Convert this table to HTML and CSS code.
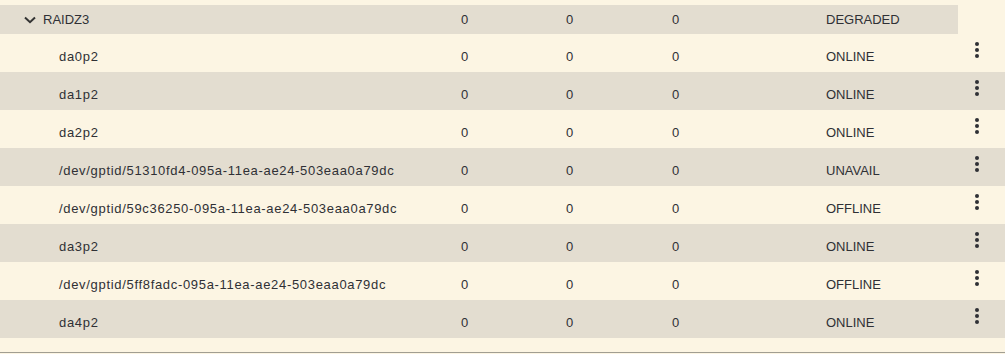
FILE: index.html
```html
<!DOCTYPE html>
<html>
<head>
<meta charset="utf-8">
<link rel="stylesheet" href="styles.css">
</head>
<body>
<div class="table">
  <div class="row parent">
    <div class="cell name"><svg class="chev" width="12" height="8" viewBox="0 0 12 8"><path d="M1 1.5 L6 6.2 L11 1.5" fill="none" stroke="#333" stroke-width="2"/></svg>RAIDZ3</div>
    <div class="cell">0</div><div class="cell">0</div><div class="cell">0</div>
    <div class="cell">DEGRADED</div>
  </div>
  <div class="row child">
    <div class="cell name">da0p2</div><div class="cell">0</div><div class="cell">0</div><div class="cell">0</div><div class="cell">ONLINE</div>
    <div class="cell act"><svg width="24" height="24" viewBox="0 0 24 24"><circle cx="12" cy="6" r="2"/><circle cx="12" cy="12" r="2"/><circle cx="12" cy="18" r="2"/></svg></div>
  </div>
  <div class="row child alt">
    <div class="cell name">da1p2</div><div class="cell">0</div><div class="cell">0</div><div class="cell">0</div><div class="cell">ONLINE</div>
    <div class="cell act"><svg width="24" height="24" viewBox="0 0 24 24"><circle cx="12" cy="6" r="2"/><circle cx="12" cy="12" r="2"/><circle cx="12" cy="18" r="2"/></svg></div>
  </div>
  <div class="row child">
    <div class="cell name">da2p2</div><div class="cell">0</div><div class="cell">0</div><div class="cell">0</div><div class="cell">ONLINE</div>
    <div class="cell act"><svg width="24" height="24" viewBox="0 0 24 24"><circle cx="12" cy="6" r="2"/><circle cx="12" cy="12" r="2"/><circle cx="12" cy="18" r="2"/></svg></div>
  </div>
  <div class="row child alt">
    <div class="cell name">/dev/gptid/51310fd4-095a-11ea-ae24-503eaa0a79dc</div><div class="cell">0</div><div class="cell">0</div><div class="cell">0</div><div class="cell">UNAVAIL</div>
    <div class="cell act"><svg width="24" height="24" viewBox="0 0 24 24"><circle cx="12" cy="6" r="2"/><circle cx="12" cy="12" r="2"/><circle cx="12" cy="18" r="2"/></svg></div>
  </div>
  <div class="row child">
    <div class="cell name">/dev/gptid/59c36250-095a-11ea-ae24-503eaa0a79dc</div><div class="cell">0</div><div class="cell">0</div><div class="cell">0</div><div class="cell">OFFLINE</div>
    <div class="cell act"><svg width="24" height="24" viewBox="0 0 24 24"><circle cx="12" cy="6" r="2"/><circle cx="12" cy="12" r="2"/><circle cx="12" cy="18" r="2"/></svg></div>
  </div>
  <div class="row child alt">
    <div class="cell name">da3p2</div><div class="cell">0</div><div class="cell">0</div><div class="cell">0</div><div class="cell">ONLINE</div>
    <div class="cell act"><svg width="24" height="24" viewBox="0 0 24 24"><circle cx="12" cy="6" r="2"/><circle cx="12" cy="12" r="2"/><circle cx="12" cy="18" r="2"/></svg></div>
  </div>
  <div class="row child">
    <div class="cell name">/dev/gptid/5ff8fadc-095a-11ea-ae24-503eaa0a79dc</div><div class="cell">0</div><div class="cell">0</div><div class="cell">0</div><div class="cell">OFFLINE</div>
    <div class="cell act"><svg width="24" height="24" viewBox="0 0 24 24"><circle cx="12" cy="6" r="2"/><circle cx="12" cy="12" r="2"/><circle cx="12" cy="18" r="2"/></svg></div>
  </div>
  <div class="row child alt">
    <div class="cell name">da4p2</div><div class="cell">0</div><div class="cell">0</div><div class="cell">0</div><div class="cell">ONLINE</div>
    <div class="cell act"><svg width="24" height="24" viewBox="0 0 24 24"><circle cx="12" cy="6" r="2"/><circle cx="12" cy="12" r="2"/><circle cx="12" cy="18" r="2"/></svg></div>
  </div>
  <div class="footer"></div>
</div>
</body>
</html>
```

FILE: styles.css
```css
html, body {
  margin: 0;
  padding: 0;
  background: #fcf5e3;
}
body {
  font-family: "Liberation Sans", Arial, sans-serif;
  font-size: 13px;
  color: #2f3035;
}
.table {
  padding-top: 5px;
  width: 1005px;
}
.row {
  display: grid;
  grid-template-columns: 461px 105px 106px 154px 132px 47px;
  line-height: 15px;
  box-sizing: border-box;
}
.parent {
  height: 29px;
  width: 958px;
  background: #e3ddd0;
  grid-template-columns: 461px 105px 106px 154px 132px;
}
.parent .cell {
  padding-top: 7px;
}
.child {
  height: 38px;
}
.child .cell {
  padding-top: 15px;
}
.child.alt {
  background: #e3ddd0;
}
.cell {
  white-space: nowrap;
}
.parent .name {
  padding-left: 24px;
  display: flex;
  align-items: flex-start;
}
.chev {
  margin-top: 4px;
  margin-right: 7px;
}
.child .name {
  padding-left: 59px;
  letter-spacing: 0.68px;
}
.child .act {
  padding-top: 4px;
  padding-left: 7px;
}
.act svg {
  display: block;
  fill: #2f3035;
}
.footer {
  height: 14px;
  border-bottom: 1px solid #a19e92;
}
```
